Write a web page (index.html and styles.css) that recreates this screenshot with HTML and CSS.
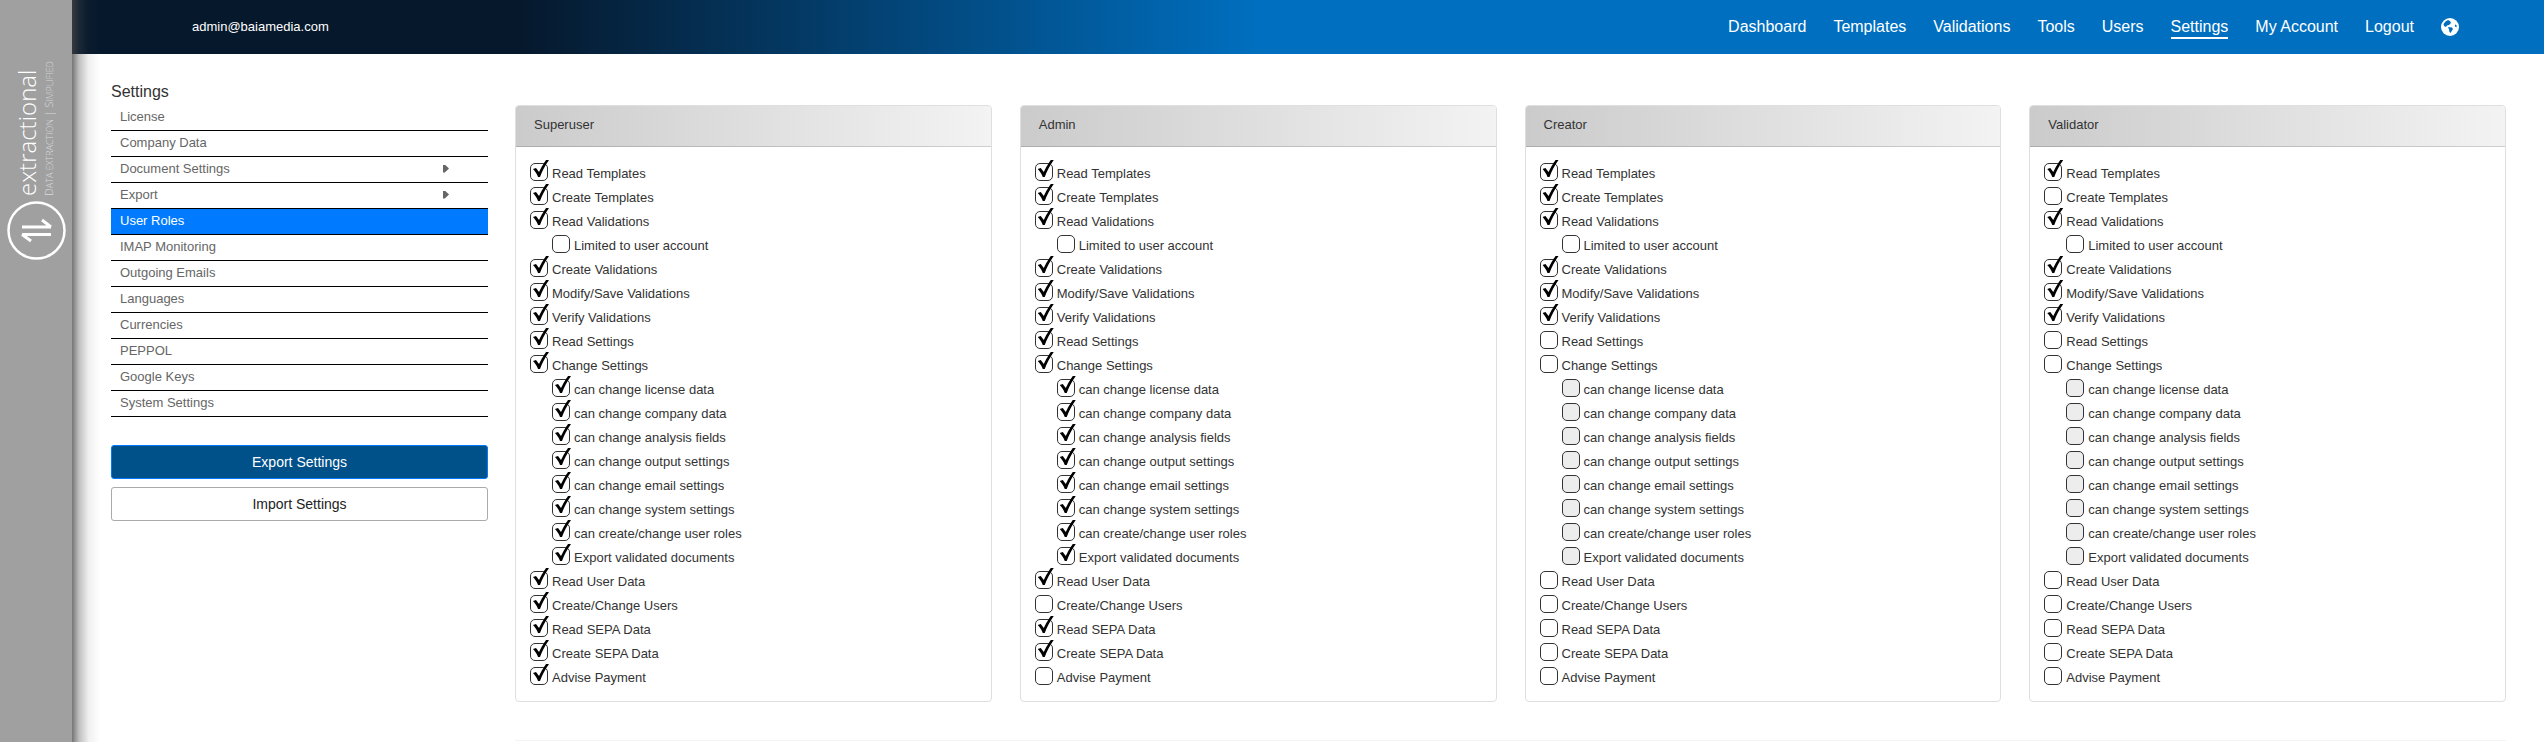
FILE: index.html
```html
<!DOCTYPE html>
<html lang="en">
<head>
<meta charset="utf-8">
<title>User Roles</title>
<link rel="stylesheet" href="styles.css">
</head>
<body>
<aside class="brand">
  <svg class="brand-logo" viewBox="0 0 72 260" role="img" aria-label="extractional">
    <g transform="rotate(-90)" fill="#fff">
      <text class="brand-name" x="-196" y="36">extractional</text>
      <text class="brand-tag" x="-196" y="53">D<tspan class="brand-small">ATA EXTRACTION</tspan> | S<tspan class="brand-small">IMPLIFIED</tspan></text>
    </g>
    <g fill="none" stroke="#fff">
      <circle cx="36.500" cy="230.500" r="28" stroke-width="2.500"/>
      <path d="M22 234.500H51M22 234.500L31 241M51 227H22M51 227L42 220" stroke-width="3"/>
    </g>
  </svg>
</aside>
<div class="page">
  <header class="topbar">
    <span class="account">admin@baiamedia.com</span>
    <nav class="nav">
      <a href="#">Dashboard</a>
      <a href="#">Templates</a>
      <a href="#">Validations</a>
      <a href="#">Tools</a>
      <a href="#">Users</a>
      <a href="#" class="current">Settings</a>
      <a href="#">My Account</a>
      <a href="#">Logout</a>
      <a href="#" class="globe" aria-label="Language">
        <svg viewBox="0 0 18 18" width="18" height="18"><circle cx="9" cy="9" r="9" fill="#fff"/><path d="M7 2L9 3L10 5L8 7L6 7.500L5 9L3 8L2.500 6L4.500 3.500ZM7 9L11 9.500L12 11L9.500 15L8.500 14L8 11.500ZM14 6.500L15.500 7L15.500 9.500L14 8.500Z" fill="#006fbf"/></svg>
      </a>
    </nav>
  </header>
  <main class="content">
    <section class="side">
      <h1>Settings</h1>
      <ul class="menu">
        <li><a href="#">License</a></li>
        <li><a href="#">Company Data</a></li>
        <li><a href="#" class="more">Document Settings</a></li>
        <li><a href="#" class="more">Export</a></li>
        <li><a href="#" class="active">User Roles</a></li>
        <li><a href="#">IMAP Monitoring</a></li>
        <li><a href="#">Outgoing Emails</a></li>
        <li><a href="#">Languages</a></li>
        <li><a href="#">Currencies</a></li>
        <li><a href="#">PEPPOL</a></li>
        <li><a href="#">Google Keys</a></li>
        <li><a href="#">System Settings</a></li>
      </ul>
      <button type="button" class="btn primary">Export Settings</button>
      <button type="button" class="btn">Import Settings</button>
    </section>
    <div class="roles-area">
      <div class="roles" id="roles"></div>
      <hr>
    </div>
  </main>
</div>
<script src="roles.js"></script>
</body>
</html>
```
FILE: styles.css
```css
* { box-sizing: border-box; }
body {
  margin: 0;
  display: flex;
  min-height: 100vh;
  background: #fff;
  color: #333;
  font-family: "Liberation Sans", Arial, sans-serif;
  font-size: 13px;
}
a { color: inherit; text-decoration: none; }
.brand {
  position: relative;
  flex: none;
  width: 72px;
  background: #a0a0a0;
}
.brand::after {
  content: "";
  position: absolute;
  top: 0;
  bottom: 0;
  left: 100%;
  width: 28px;
  background: linear-gradient(90deg, rgba(70, 70, 70, .75), rgba(70, 70, 70, .35) 25%, rgba(70, 70, 70, .08) 60%, transparent);
}
.brand-logo { display: block; width: 72px; }
.brand-name { font: 300 24px "Open Sans", sans-serif; }
.brand-tag { font: 300 11px "Open Sans", sans-serif; opacity: .6; }
.brand-small { font-size: 9px; }
.page { flex: 1; min-width: 0; }
.topbar {
  display: flex;
  align-items: center;
  justify-content: space-between;
  height: 54px;
  padding: 0 85px 0 120px;
  background: linear-gradient(90deg, #06182c 18%, #006fbf 48%);
  color: #fff;
}
.account { padding-bottom: 2px; }
.nav { display: flex; align-items: center; gap: 27px; font-size: 16px; line-height: 20px; }
.nav a { border-top: 2px solid transparent; border-bottom: 2px solid transparent; }
.nav .current { border-bottom-color: #fff; }
.nav .globe { display: flex; }
.content {
  display: flex;
  gap: 27px;
  padding: 28px 38px 0 39px;
}
.side { flex: none; width: 377px; }
h1 { margin: 0 0 3px; font-size: 16px; font-weight: 400; line-height: 20px; }
.menu { margin: 0 0 28px; padding: 0; list-style: none; }
.menu a {
  display: flex;
  align-items: center;
  justify-content: space-between;
  height: 26px;
  padding: 0 39px 2px 9px;
  border-bottom: 1px solid #000;
  color: #666;
}
.menu .more::after {
  content: "";
  width: 6px;
  height: 8px;
  background: #666;
  clip-path: polygon(0 0, 30% 0, 100% 50%, 30% 100%, 0 100%);
}
.menu .active { background: #007bff; color: #fff; }
.btn {
  display: block;
  width: 100%;
  height: 34px;
  margin-bottom: 8px;
  border: 1px solid #aaa;
  border-radius: 3px;
  background: #fff;
  color: #222;
  font: 14px "Liberation Sans", Arial, sans-serif;
}
.btn.primary { border-color: #007bff; background: #00508a; color: #fff; }
.roles-area { flex: 1; min-width: 0; padding-top: 23px; }
.roles { display: grid; grid-template-columns: repeat(4, 1fr); gap: 28px; }
.card { border: 1px solid #dfdfdf; border-radius: 4px; overflow: hidden; }
.card h2 {
  margin: 0;
  padding: 0 18px 2px;
  border-bottom: 1px solid rgba(0, 0, 0, .15);
  background: linear-gradient(90deg, #cbcbcb, #f3f3f3);
  font-size: 13px;
  font-weight: 400;
  line-height: 38px;
}
.rights { margin: 0; padding: 14px 14px 12px; list-style: none; }
.rights label { display: flex; align-items: center; gap: 4px; height: 24px; }
.rights .sub { padding-left: 22px; }
.rights input {
  position: relative;
  flex: none;
  appearance: none;
  width: 18px;
  height: 18px;
  margin: 0 0 2px;
  border: 1px solid #333;
  border-radius: 5px;
  background: #fff;
}
.rights input:disabled { background: #ededed; }
.rights input:checked::after {
  content: "";
  position: absolute;
  left: 2px;
  top: -4px;
  width: 16px;
  height: 18px;
  background: #000;
  clip-path: path("M0 9L3 8L6 12C9 6 11 3 13 0L16 0C12 6 9 11 7 17L5 17C4 14 2 11 0 9Z");
}
hr { margin: 38px 0 0; border: 0; border-top: 1px solid #f3f3f3; }
```
FILE: roles.js
```js
const rights = [
  "Read Templates", "Create Templates", "Read Validations", ">Limited to user account",
  "Create Validations", "Modify/Save Validations", "Verify Validations", "Read Settings",
  "Change Settings", ">can change license data", ">can change company data",
  ">can change analysis fields", ">can change output settings", ">can change email settings",
  ">can change system settings", ">can create/change user roles", ">Export validated documents",
  "Read User Data", "Create/Change Users", "Read SEPA Data", "Create SEPA Data", "Advise Payment"
];
// x = granted, o = not granted, d = unavailable
const roles = {
  Superuser: "xxxoxxxxxxxxxxxxxxxxxx",
  Admin:     "xxxoxxxxxxxxxxxxxxoxxo",
  Creator:   "xxxoxxxooddddddddooooo",
  Validator: "xoxoxxxooddddddddooooo"
};
document.getElementById("roles").innerHTML = Object.entries(roles).map(([name, flags]) =>
  `<section class="card"><h2>${name}</h2><ul class="rights">` +
  rights.map((right, i) => {
    const state = flags[i] === "x" ? " checked" : flags[i] === "d" ? " disabled" : "";
    const sub = right[0] === ">" ? ' class="sub"' : "";
    return `<li${sub}><label><input type="checkbox"${state}>${right.replace(">", "")}</label></li>`;
  }).join("") + "</ul></section>").join("");
```
